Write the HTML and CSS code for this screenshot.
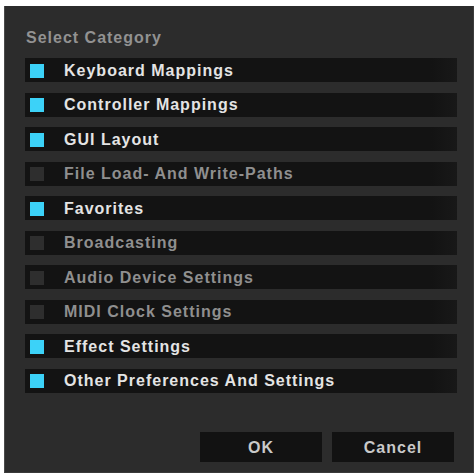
FILE: index.html
```html
<!DOCTYPE html>
<html lang="en">
<head>
    <meta charset="UTF-8">
    <title>Select Category</title>
    <link rel="stylesheet" href="styles.css">
</head>
<body>
    <div class="dialog">
        <div class="title">Select Category</div>
        <ul class="categories">
            <li class="row on"><span class="box"></span>Keyboard Mappings</li>
            <li class="row on"><span class="box"></span>Controller Mappings</li>
            <li class="row on"><span class="box"></span>GUI Layout</li>
            <li class="row"><span class="box"></span>File Load- And Write-Paths</li>
            <li class="row on"><span class="box"></span>Favorites</li>
            <li class="row"><span class="box"></span>Broadcasting</li>
            <li class="row"><span class="box"></span>Audio Device Settings</li>
            <li class="row"><span class="box"></span>MIDI Clock Settings</li>
            <li class="row on"><span class="box"></span>Effect Settings</li>
            <li class="row on"><span class="box"></span>Other Preferences And Settings</li>
        </ul>
        <div class="buttons">
            <button class="btn">OK</button>
            <button class="btn">Cancel</button>
        </div>
    </div>
</body>
</html>
```

FILE: styles.css
```css
body, html {
    margin: 0;
    padding: 0;
    background: #fff;
    font-family: "Liberation Sans", Arial, sans-serif;
}
.dialog {
    box-sizing: border-box;
    margin: 6px 0 0 4px;
    width: 470px;
    height: 467px;
    padding: 20px 19px 10px 20px;
    background: #2c2c2c;
    border-left: 1px solid #4a4a4a;
    border-right: 1px solid #3c3c3c;
    border-bottom: 1px solid #3a3a3a;
    display: flex;
    flex-direction: column;
}
.title {
    height: 21px;
    line-height: 22px;
    padding-top: 1px;
    margin-bottom: 10px;
    padding-left: 1px;
    color: #929292;
    font-size: 16px;
    font-weight: bold;
    letter-spacing: 1px;
}
.categories {
    list-style: none;
    margin: 0;
    padding: 0;
    width: 432px;
    display: flex;
    flex-direction: column;
    gap: 10.5px;
}
.row {
    box-sizing: border-box;
    height: 24px;
    display: flex;
    align-items: center;
    gap: 20px;
    padding: 1px 0 0 5px;
    background: linear-gradient(to right, #131313 94%, #181818);
    color: #8f8f8f;
    font-size: 16px;
    font-weight: bold;
    letter-spacing: 1px;
}
.row.on {
    color: #e4e4e4;
}
.box {
    width: 14px;
    height: 14px;
    flex: none;
    background: #2e2e2e;
}
.row.on .box {
    background: #3cd2f8;
}
.buttons {
    margin-top: auto;
    display: flex;
    justify-content: flex-end;
    gap: 10px;
}
.btn {
    width: 122px;
    height: 30px;
    padding-top: 3px;
    border: none;
    background: #121212;
    color: #c9c9c9;
    font-family: inherit;
    font-size: 16px;
    font-weight: bold;
    letter-spacing: 1px;
}
```
